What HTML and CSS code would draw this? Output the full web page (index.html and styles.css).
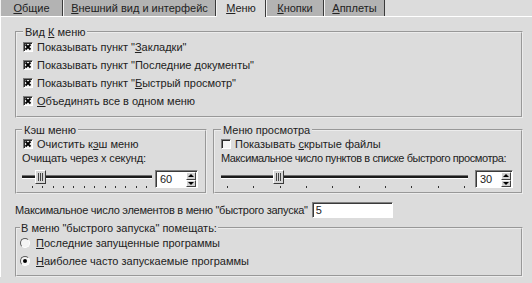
FILE: index.html
```html
<!DOCTYPE html>
<html lang="ru">
<head>
    <meta charset="UTF-8">
    <title>Настройки меню</title>
    <link rel="stylesheet" href="styles.css">
</head>
<body>
    <div class="window">
        <!-- Вкладки -->
        <div class="tabs">
            <span class="tab tab-general"><u>О</u>бщие</span>
            <span class="tab tab-look"><u>В</u>нешний вид и интерфейс</span>
            <span class="tab tab-menu active"><u>М</u>еню</span>
            <span class="tab tab-buttons"><u>К</u>нопки</span>
            <span class="tab tab-applets"><u>А</u>пплеты</span>
        </div>

        <div class="panel">
            <!-- Вид К меню -->
            <fieldset class="group group-view">
                <legend>Вид <u>К</u> меню</legend>
                <div class="option"><span class="check checked"><svg viewBox="0 0 8 8"><path d="M1.5 1.5L6.5 6.5M6.5 1.5L1.5 6.5"/></svg></span><span>Показывать пункт "<u>З</u>акладки"</span></div>
                <div class="option"><span class="check checked"><svg viewBox="0 0 8 8"><path d="M1.5 1.5L6.5 6.5M6.5 1.5L1.5 6.5"/></svg></span><span>Показывать пункт "Последние документы"</span></div>
                <div class="option"><span class="check checked"><svg viewBox="0 0 8 8"><path d="M1.5 1.5L6.5 6.5M6.5 1.5L1.5 6.5"/></svg></span><span>Показывать пункт "<u>Б</u>ыстрый просмотр"</span></div>
                <div class="option"><span class="check checked"><svg viewBox="0 0 8 8"><path d="M1.5 1.5L6.5 6.5M6.5 1.5L1.5 6.5"/></svg></span><span><u>О</u>бъединять все в одном меню</span></div>
            </fieldset>

            <div class="columns">
                <!-- Кэш меню -->
                <fieldset class="group group-cache">
                    <legend>Кэш меню</legend>
                    <div class="option option-tight"><span class="check checked"><svg viewBox="0 0 8 8"><path d="M1.5 1.5L6.5 6.5M6.5 1.5L1.5 6.5"/></svg></span><span>Очистить к<u>э</u>ш меню</span></div>
                    <div class="caption">Очищать через х секунд:</div>
                    <div class="slider-row">
                        <div class="slider slider-cache">
                            <div class="track"></div>
                            <div class="thumb"></div>
                            <div class="ticks">
                                <span></span><span></span><span></span><span></span><span></span><span></span>
                                <span></span><span></span><span></span><span></span><span></span><span></span>
                            </div>
                        </div>
                        <div class="spin spin-cache">
                            <span class="spin-value">60</span>
                            <span class="spin-buttons"><span class="spin-up"></span><span class="spin-down"></span></span>
                        </div>
                    </div>
                </fieldset>

                <!-- Меню просмотра -->
                <fieldset class="group group-browse">
                    <legend>Меню просмотра</legend>
                    <div class="option option-tight"><span class="check"></span><span>Показывать <u>с</u>крытые файлы</span></div>
                    <div class="caption caption-long">Максимальное число пунктов в списке быстрого просмотра:</div>
                    <div class="slider-row">
                        <div class="slider slider-browse">
                            <div class="track"></div>
                            <div class="thumb"></div>
                            <div class="ticks">
                                <span></span><span></span><span></span><span></span><span></span>
                                <span></span><span></span><span></span><span></span><span></span>
                            </div>
                        </div>
                        <div class="spin spin-browse">
                            <span class="spin-value">30</span>
                            <span class="spin-buttons"><span class="spin-up"></span><span class="spin-down"></span></span>
                        </div>
                    </div>
                </fieldset>
            </div>

            <div class="quick-row">
                <span class="quick-label">Максимальное число элементов в меню "быстрого запуска"</span>
                <span class="textbox">5</span>
            </div>

            <!-- Быстрый запуск -->
            <fieldset class="group group-launch">
                <legend>В меню "быстрого запуска" помещать:</legend>
                <div class="option"><span class="radio"></span><span><u>П</u>оследние запущенные программы</span></div>
                <div class="option"><span class="radio selected"></span><span><u>Н</u>аиболее часто запускаемые программы</span></div>
            </fieldset>
        </div>
    </div>
</body>
</html>
```

FILE: styles.css
```css
body {
    margin: 0;
    background-color: #dcdcdc;
    font-family: "Liberation Sans", Arial, sans-serif;
    font-size: 11px;
    color: #222;
}
.window {
    width: 532px;
    height: 283px;
    overflow: hidden;
}
u {
    text-decoration-thickness: 1px;
    text-underline-offset: 1px;
}

/* tabs */
.tabs {
    display: flex;
    height: 16px;
}
.tab {
    box-sizing: border-box;
    height: 16px;
    line-height: 16px;
    text-align: center;
    white-space: nowrap;
    background-color: #b3b3b3;
    border-left: 1px solid #f2f2f2;
    border-right: 1px solid #3a3a3a;
}
.tab-general { width: 63px; }
.tab-look { width: 153px; }
.tab-menu { width: 50px; }
.tab-buttons { width: 58px; }
.tab-applets { width: 61px; }
.tab.active {
    height: 17px;
    background-color: #dcdcdc;
    position: relative;
    z-index: 1;
}

.panel {
    border-top: 1px solid #fff;
    border-left: 1px solid #fff;
    padding: 0 9px 0 14px;
}

/* group boxes */
.group {
    box-sizing: border-box;
    margin: 0;
    min-width: 0;
    border: 2px groove #ececec;
    padding: 0 6px 6px;
}
.group legend {
    padding: 0 2px;
    line-height: 12px;
    white-space: nowrap;
}
.group-view {
    margin-top: 9px;
}
.option {
    display: flex;
    align-items: center;
    height: 18px;
    white-space: nowrap;
}
.option-tight {
    height: 16px;
}
.check {
    box-sizing: border-box;
    flex: none;
    width: 10px;
    height: 10px;
    margin-right: 4px;
    background-color: #f4f4f4;
    border: 1px solid;
    border-color: #7a7a7a #fff #fff #7a7a7a;
    box-shadow: inset 1px 1px 0 #2a2a2a;
    display: flex;
}
.check svg {
    width: 8px;
    height: 8px;
    fill: none;
    stroke: #000;
    stroke-width: 1.8;
}
.radio {
    box-sizing: border-box;
    flex: none;
    width: 10px;
    height: 10px;
    margin-right: 6px;
    border-radius: 50%;
    background-color: #f4f4f4;
    border: 1px solid;
    border-color: #5a5a5a #fff #fff #5a5a5a;
    display: flex;
    align-items: center;
    justify-content: center;
}
.radio.selected::after {
    content: "";
    width: 4px;
    height: 4px;
    border-radius: 50%;
    background-color: #000;
}

.columns {
    display: flex;
    gap: 6px;
    margin-top: 6px;
}
.group-cache {
    width: 192px;
    flex: none;
    padding: 0 7px 2px 5px;
}
.group-cache .check {
    margin-left: 1px;
}
.group-browse {
    flex: 1;
    padding: 0 8px 2px 6px;
}
.caption {
    height: 13px;
    line-height: 13px;
    white-space: nowrap;
    letter-spacing: -0.15px;
}
.caption-long {
    letter-spacing: -0.42px;
}

/* sliders */
.slider-row {
    display: flex;
    margin-top: 3px;
    height: 22px;
}
.slider {
    flex: 1;
    position: relative;
}
.track {
    box-sizing: border-box;
    height: 4px;
    margin-top: 7px;
    background-color: #1c1c1c;
    border-top: 1px solid #707070;
    border-bottom: 1px solid #fff;
}
.thumb {
    position: absolute;
    top: 2px;
    box-sizing: border-box;
    width: 11px;
    height: 14px;
    border: 1px solid;
    border-color: #fff #3a3a3a #3a3a3a #fff;
    background:
        linear-gradient(to right, transparent 1px, #444 1px 2px, transparent 2px 3px, #444 3px 4px, transparent 4px 5px, #444 5px 6px, transparent 6px) center / 7px 8px no-repeat,
        #d6d6d6;
}
.slider-cache .thumb { left: 13px; }
.slider-browse .thumb { left: 52px; }
.ticks {
    display: flex;
    justify-content: space-between;
    margin-top: 7px;
}
.slider-cache .ticks { padding: 0 5px 0 10px; }
.slider-browse .ticks { padding: 0 3px 0 6px; }
.ticks span {
    width: 1px;
    height: 2px;
    background-color: #333;
}

/* spin boxes */
.spin {
    box-sizing: border-box;
    display: flex;
    justify-content: space-between;
    height: 18px;
    margin-top: 2px;
    background-color: #fff;
    border: 1px solid;
    border-color: #808080 #fff #fff #808080;
    box-shadow: inset 1px 1px 0 #3a3a3a;
}
.spin-cache { width: 43px; margin-left: 3px; }
.spin-browse { width: 38px; margin-left: 7px; }
.spin-value {
    padding-left: 4px;
    line-height: 16px;
}
.spin-buttons {
    display: flex;
    flex-direction: column;
    width: 10px;
    margin: 1px 1px 0 0;
}
.spin-up,
.spin-down {
    box-sizing: border-box;
    height: 8px;
    background-color: #d2d2d2;
    border: 1px solid;
    border-color: #fff #404040 #404040 #fff;
    display: flex;
    align-items: center;
    justify-content: center;
}
.spin-up::after {
    content: "";
    border: 3px solid transparent;
    border-top: 0;
    border-bottom: 3px solid #000;
}
.spin-down::after {
    content: "";
    border: 3px solid transparent;
    border-bottom: 0;
    border-top: 3px solid #000;
}

.quick-row {
    display: flex;
    align-items: center;
    height: 17px;
    margin-top: 7px;
    white-space: nowrap;
}
.quick-label {
    letter-spacing: -0.26px;
}
.textbox {
    box-sizing: border-box;
    width: 81px;
    height: 16px;
    margin-left: 4px;
    padding-left: 3px;
    line-height: 14px;
    background-color: #fff;
    border: 1px solid;
    border-color: #808080 #fff #fff #808080;
    box-shadow: inset 1px 1px 0 #3a3a3a;
}

.group-launch {
    margin-top: 4px;
    padding: 0 6px 5px 3px;
}
.group-launch legend {
    padding: 0 1px;
}
```
